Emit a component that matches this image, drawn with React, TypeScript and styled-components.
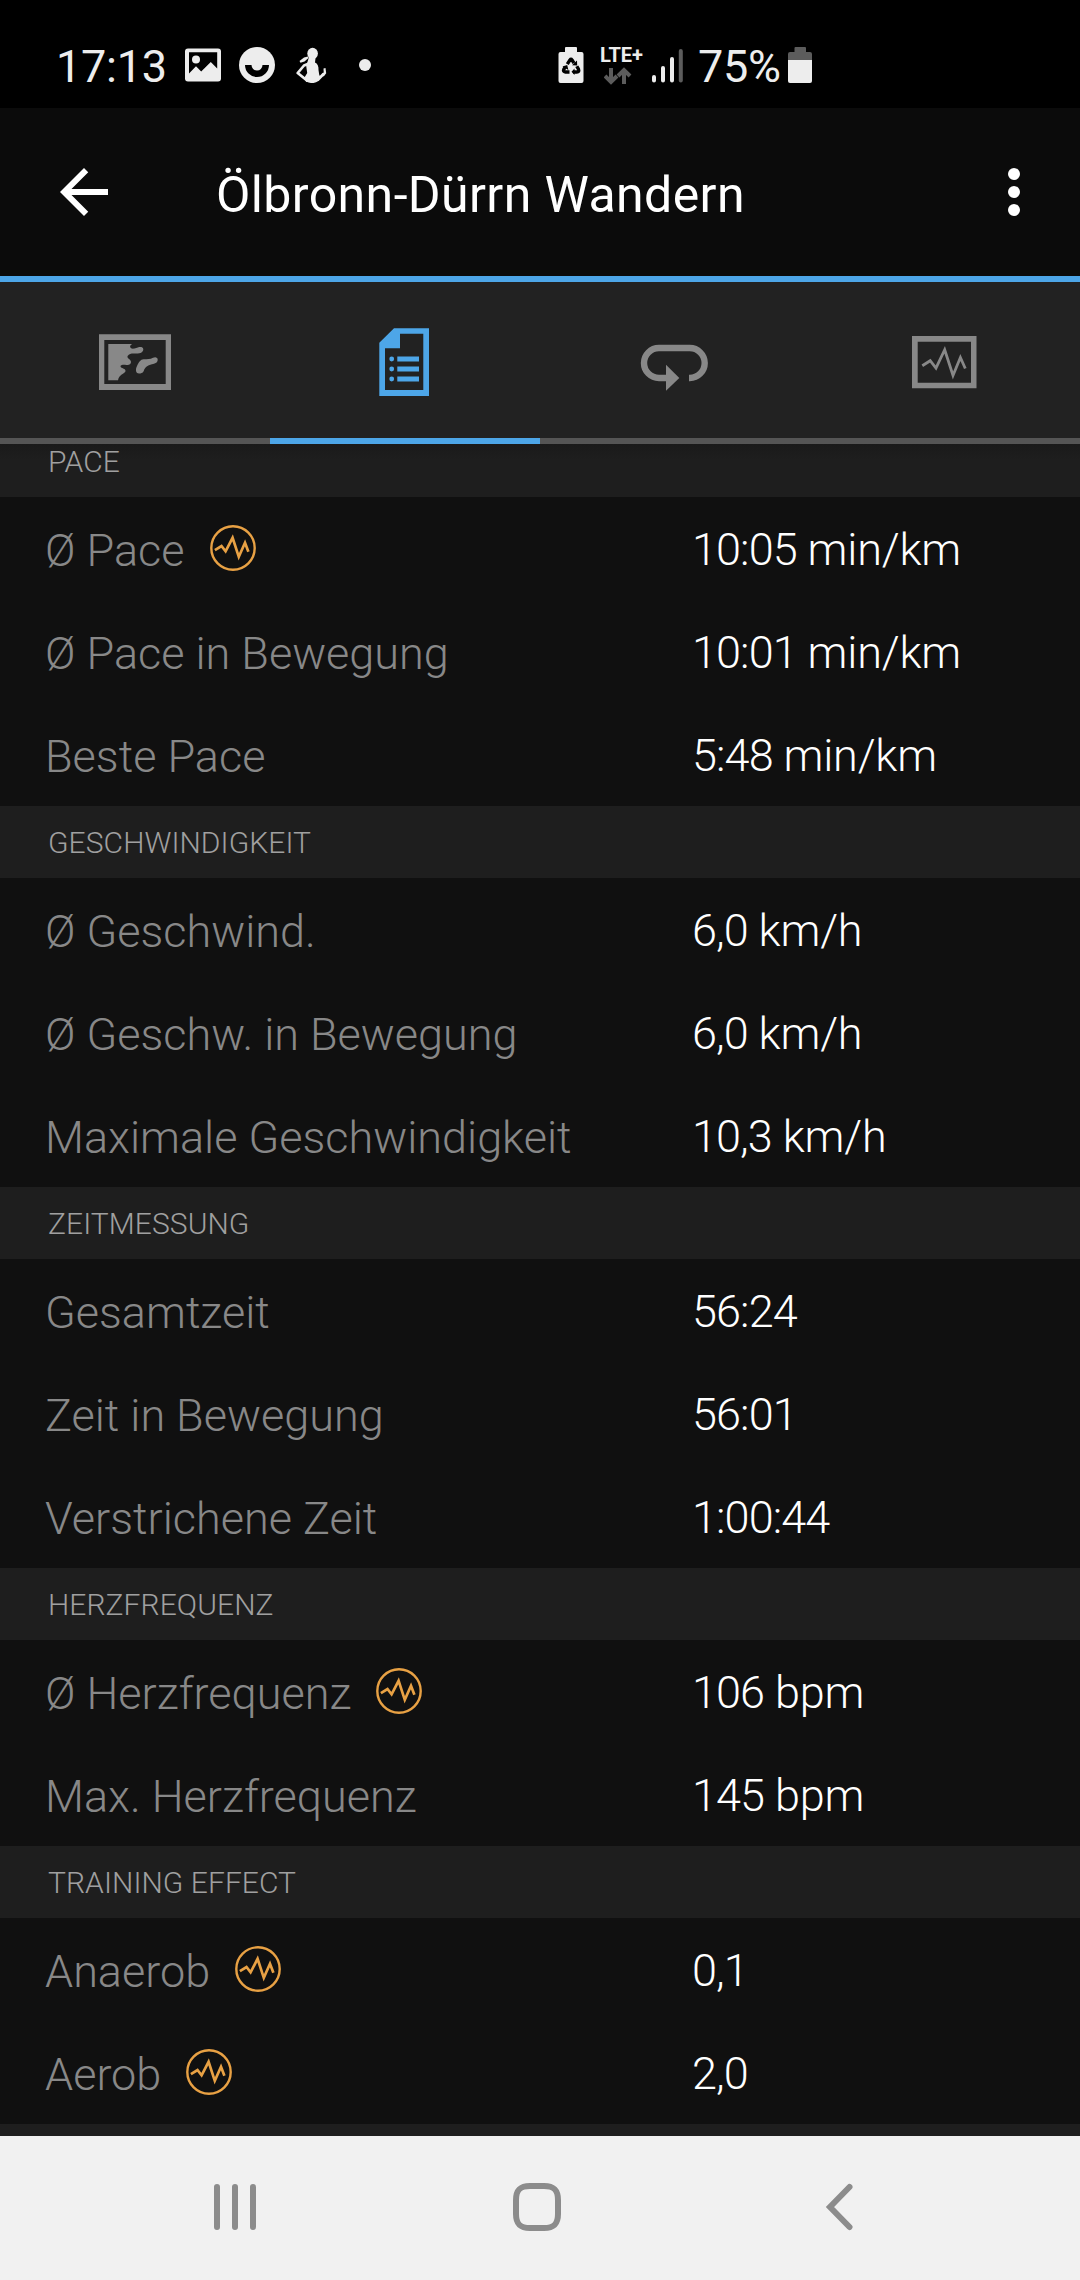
import React from 'react';
import styled, { createGlobalStyle } from 'styled-components';

const BLUE = '#4da6e8';
const GREY = '#888888';
const STATUS = '#ededed';
const DIM = '#5c5c5c';

const GlobalStyle = createGlobalStyle`
  body {
    margin: 0;
    background: #101010;
  }
  svg {
    display: block;
    flex: none;
  }
`;

const Screen = styled.div`
  width: 1080px;
  height: 2280px;
  display: flex;
  flex-direction: column;
  overflow: hidden;
  background: #101010;
  color: #ffffff;
  font-family: Roboto, 'Noto Sans', sans-serif;
`;

const StatusBar = styled.div`
  flex: none;
  box-sizing: border-box;
  height: 108px;
  padding: 22px 268px 0 56px;
  display: flex;
  align-items: center;
  justify-content: space-between;
  background: #000000;
  color: ${STATUS};
`;

const StatusGroup = styled.div`
  display: flex;
  align-items: center;
`;

const StatusText = styled.span<{ $width: number }>`
  width: ${(p) => p.$width}px;
  padding-top: 3px;
  font-size: 45px;
  line-height: 53px;
  letter-spacing: -0.25px;
  white-space: nowrap;
`;

const Gap = styled.span<{ $size: number }>`
  flex: none;
  width: ${(p) => p.$size}px;
`;

const Network = styled.div`
  width: 43px;
  height: 37px;
  padding-top: 1px;
  display: flex;
  flex-direction: column;
  align-items: flex-start;
`;

const NetworkName = styled.span`
  font-size: 20px;
  font-weight: 700;
  line-height: 17px;
  letter-spacing: -0.1px;
`;

const NetworkArrows = styled.svg`
  margin: 3px 0 0 4px;
`;

const AppBar = styled.header`
  flex: none;
  box-sizing: border-box;
  height: 174px;
  padding: 0 30px 0 48px;
  display: flex;
  align-items: center;
  background: #0b0b0b;
  border-bottom: 6px solid ${BLUE};
`;

const Title = styled.h1`
  flex: 1;
  margin: 0 0 0 96px;
  padding-top: 6px;
  font-size: 50px;
  font-weight: 400;
  line-height: 59px;
  letter-spacing: 0.4px;
`;

const Tabs = styled.nav`
  flex: none;
  height: 162px;
  display: grid;
  grid-template-columns: repeat(4, 1fr);
  background: #222222;
`;

const Tab = styled.div<{ $active?: boolean }>`
  display: flex;
  align-items: center;
  justify-content: center;
  padding-top: 4px;
  color: ${(p) => (p.$active ? BLUE : GREY)};
  border-bottom: 6px solid ${(p) => (p.$active ? BLUE : '#555555')};
`;

const List = styled.main`
  flex: 1;
  min-height: 0;
  overflow: hidden;
  display: flex;
  flex-direction: column;
`;

const SectionHeader = styled.h2<{ $clipped?: boolean }>`
  flex: none;
  box-sizing: border-box;
  height: ${(p) => (p.$clipped ? 53 : 72)}px;
  margin: 0;
  padding: 0 48px ${(p) => (p.$clipped ? 17 : 17.5)}px;
  display: flex;
  align-items: flex-end;
  background: ${(p) => (p.$clipped ? 'linear-gradient(#1a1a1a, #1e1e1e 16px)' : '#1e1e1e')};
  color: #a0a0a0;
  font-size: 30px;
  font-weight: 300;
  line-height: 36px;
  letter-spacing: 0.07px;
`;

const Row = styled.div`
  flex: none;
  height: 103px;
  padding-left: 45px;
  display: grid;
  grid-template-columns: 647px 1fr;
  align-items: center;
  font-size: 45px;
  font-weight: 300;
  line-height: 53px;
  white-space: nowrap;
`;

const Label = styled.div`
  display: flex;
  align-items: center;
  gap: 24px;
  color: #888888;
`;

const LabelText = styled.span`
  padding-top: 4px;
`;

const Value = styled.div`
  padding-top: 2px;
  white-space: pre;
`;

const Amount = styled.span`
  letter-spacing: -0.9px;
`;

const Unit = styled.span`
  letter-spacing: -0.2px;
`;

const Badge = styled.svg`
  margin-bottom: 2px;
`;

const NavBar = styled.footer`
  flex: none;
  box-sizing: border-box;
  height: 144px;
  padding: 0 90px 2px 84px;
  display: grid;
  grid-template-columns: repeat(3, 302px);
  align-items: center;
  justify-items: center;
  background: #f1f1f1;
  color: #8c8c8c;
`;

const PictureIcon = () => (
  <svg width="36" height="34" viewBox="0 0 36 34">
    <path fillRule="evenodd" fill={STATUS} d="M3 0.5h30a3 3 0 0 1 3 3v27a3 3 0 0 1-3 3H3a3 3 0 0 1-3-3v-27a3 3 0 0 1 3-3zM4 4.3v21.2l7-7.2 5.2 5.2L25.800 14l6.400 6.500V4.300z" />
    <circle cx="11" cy="11.500" r="4" fill={STATUS} />
  </svg>
);

const SmileIcon = () => (
  <svg width="36" height="36" viewBox="0 0 36 36">
    <circle cx="18" cy="18" r="18" fill={STATUS} />
    <path d="M6 18h6.500a5.500 5.500 0 0 0 11 0H30a12 12 0 0 1-24 0z" fill="#000" />
  </svg>
);

const PersonIcon = () => (
  <svg width="32" height="36" viewBox="0 0 32 36">
    <ellipse cx="16.600" cy="6.500" rx="5.300" ry="5.800" fill={STATUS} />
    <path d="M12 9.500L8 10.500 3.500 14l1 1.700 4-1.200 4-3.500z" fill={STATUS} />
    <path d="M13 10l6.500 1-.5 4.500c2.500 1 3.800 4 3.500 7.500l.7 4.500 1 2.500-5 5h-9l-2-4 3-5-1-7z" fill={STATUS} />
    <path d="M13 16.500L8 18.500 1.700 26l9 7.300c3.500 1.700 8 1.700 11-.3l6-6.200" fill="none" stroke={STATUS} strokeWidth="2.700" strokeLinejoin="round" />
    <path d="M5.500 25.500L9 21.500l.5 5-1.500 1.700z" fill="#000" />
    <path d="M27.500 21.500l2-.5.700 5.300-2.500 3.200-2-1.700 2-2.500z" fill={STATUS} />
  </svg>
);

const DotIcon = () => (
  <svg width="12" height="12" viewBox="0 0 12 12">
    <circle cx="6" cy="6" r="6" fill={STATUS} />
  </svg>
);

const RecycleBatteryIcon = () => (
  <svg width="26" height="36" viewBox="0 0 26 36">
    <path d="M7 1a1 1 0 0 1 1-1h10a1 1 0 0 1 1 1v4h4.500a2 2 0 0 1 2 2v27a2 2 0 0 1-2 2h-21a2 2 0 0 1-2-2V7a2 2 0 0 1 2-2H7z" fill={STATUS} />
    <g fill="none" stroke="#000" strokeWidth="3.400">
      <path d="M9.300 17.200L12 12.900q1-1.400 2 0l2 3.300" />
      <path d="M18.800 19.200l1.700 3.100q1 2.500-1.700 2.700h-3.600" />
      <path d="M11.500 25H7.400q-2.600-.3-1.600-2.600l1.700-2.800" />
    </g>
    <path d="M14 18.200l5.200.3-.2-5zM16.500 21.500v6.500l-3-3.200zM4.500 19.500l4.700-1.500 1.200 5z" fill="#000" />
  </svg>
);

const SignalIcon = () => (
  <svg width="32" height="36" viewBox="0 0 32 36" strokeWidth="4" strokeLinecap="round">
    <path d="M3 30v3.500M12 21v12.500M21 12v21.500" stroke={STATUS} />
    <path d="M29.800 4v29.500" stroke={DIM} />
  </svg>
);

const BatteryIcon = () => (
  <svg width="24" height="36" viewBox="0 0 24 36">
    <path d="M6.500 1a1 1 0 0 1 1-1h9.500a1 1 0 0 1 1 1v4h4a2 2 0 0 1 2 2v6H0V7a2 2 0 0 1 2-2h4.500z" fill={DIM} />
    <path d="M0 13h24v21a2 2 0 0 1-2 2H2a2 2 0 0 1-2-2z" fill={STATUS} />
  </svg>
);

const BackArrowIcon = () => (
  <svg width="72" height="72" viewBox="0 0 24 24" fill="#fff">
    <path d="M20 11H7.830l5.590-5.590L12 4l-8 8 8 8 1.410-1.410L7.830 13H20v-2z" />
  </svg>
);

const MoreIcon = () => (
  <svg width="72" height="72" viewBox="0 0 24 24" fill="#fff">
    <circle cx="12" cy="6" r="2" />
    <circle cx="12" cy="12" r="2" />
    <circle cx="12" cy="18" r="2" />
  </svg>
);

const TabIcon = ({ children }: { children: React.ReactNode }) => (
  <svg width="90" height="80" viewBox="0 0 90 80" fill="currentColor">
    {children}
  </svg>
);

const MapIcon = () => (
  <TabIcon>
    <path fillRule="evenodd" d="M9 12.300h72V68H9zM14.300 18v44h61.400V18z" />
    <path d="M18.300 22H42l-1.800 1.800c-.6 2.200 1.300 3.200 4.300 2.700 3.500-1.200 5.500-1.900 7.500-1.200 1.900 1 1.700 3.700-.2 5-2.300 1.600-5.300 1.200-8.800 1.200-3 0-5.700 1.800-5.500 3.500.3 2 3.500 2.500 3.500 5 0 2-2 3.300-4.500 2.900-2.500-.3-4.500-.6-5.700.7-1.200 2 2 2.700 3.500 3.400 2.300 1.600 1 3.300-1 4.500-2.800 1.700-4.800 3.500-5.300 6.800H18.300z" />
    <path d="M49 51.500c-3 0-4-3.500-2-7.500 2-4.300 3.500-6.300 6.500-6.700 4-.4 6.500.2 9.500-1.600 2.500-1.200 4.700-.2 4.700 1.800 0 2.300-1 3.500-3.700 4.300-4 .8-8 2.400-9.500 5.200-1 2.200-1 4.500-5.500 4.500z" />
  </TabIcon>
);

const DocumentIcon = () => (
  <TabIcon>
    <path fillRule="evenodd" d="M34 6.300h35V74H19.300V20.700zM40 11.700v14.600H25V68h38.300V11.700z" />
    {[37, 47, 57].map((y) => (
      <g key={y}>
        <circle cx="31.700" cy={y} r="2.400" />
        <rect x="37.300" y={y - 2.500} width="21.700" height="5" />
      </g>
    ))}
  </TabIcon>
);

const LapIcon = () => (
  <TabIcon>
    <path d="M37 56H29a15 15 0 0 1 0-30h30.700a15 15 0 0 1 0 30h-.7" fill="none" stroke="currentColor" strokeWidth="6.400" />
    <path d="M36 42.700L49.300 56 36 68.700z" />
  </TabIcon>
);

const ChartIcon = () => (
  <TabIcon>
    <path fillRule="evenodd" d="M12 14h64.500v52.300H12zM17.700 19.700v41H71v-41z" />
    <path d="M22.300 43.700l7.900-5 5.800 7.500 8.700-18.500L53 53.500l7.400-18 4.900 11" fill="none" stroke="currentColor" strokeWidth="2.800" />
  </TabIcon>
);

const WaveBadge = () => (
  <Badge width="48" height="48" viewBox="0 0 48 48" fill="none" stroke="#e8a144">
    <circle cx="24" cy="24" r="21.700" strokeWidth="2.400" />
    <path d="M5.900 26.200l6.600-4.200 4.100 5.300 7-13.500 6.200 19 6.200-14 3.400 9" strokeWidth="2.700" />
  </Badge>
);

const RecentsIcon = () => (
  <svg width="48" height="48" viewBox="0 0 48 48" stroke="currentColor" strokeWidth="6" strokeLinecap="round">
    <path d="M6 4v40M24 4v40M42 4v40" />
  </svg>
);

const HomeIcon = () => (
  <svg width="48" height="48" viewBox="0 0 48 48" fill="none" stroke="currentColor" strokeWidth="6">
    <path d="M17 3h14c10 0 14 4 14 14v14c0 10-4 14-14 14H17C7 45 3 41 3 31V17C3 7 7 3 17 3z" />
  </svg>
);

const BackIcon = () => (
  <svg width="48" height="48" viewBox="0 0 48 48" fill="none" stroke="currentColor" strokeWidth="6" strokeLinecap="round">
    <path d="M34.500 4L15 24l19.500 20" />
  </svg>
);

type Metric = { label: string; amount: string; unit?: string; chart?: boolean };

const sections: { title: string; rows: Metric[] }[] = [
  {
    title: 'PACE',
    rows: [
      { label: 'Ø Pace', amount: '10:05', unit: 'min/km', chart: true },
      { label: 'Ø Pace in Bewegung', amount: '10:01', unit: 'min/km' },
      { label: 'Beste Pace', amount: '5:48', unit: 'min/km' },
    ],
  },
  {
    title: 'GESCHWINDIGKEIT',
    rows: [
      { label: 'Ø Geschwind.', amount: '6,0', unit: 'km/h' },
      { label: 'Ø Geschw. in Bewegung', amount: '6,0', unit: 'km/h' },
      { label: 'Maximale Geschwindigkeit', amount: '10,3', unit: 'km/h' },
    ],
  },
  {
    title: 'ZEITMESSUNG',
    rows: [
      { label: 'Gesamtzeit', amount: '56:24' },
      { label: 'Zeit in Bewegung', amount: '56:01' },
      { label: 'Verstrichene Zeit', amount: '1:00:44' },
    ],
  },
  {
    title: 'HERZFREQUENZ',
    rows: [
      { label: 'Ø Herzfrequenz', amount: '106', unit: 'bpm', chart: true },
      { label: 'Max. Herzfrequenz', amount: '145', unit: 'bpm' },
    ],
  },
  {
    title: 'TRAINING EFFECT',
    rows: [
      { label: 'Anaerob', amount: '0,1', chart: true },
      { label: 'Aerob', amount: '2,0', chart: true },
    ],
  },
];

export default function App() {
  return (
    <Screen>
      <GlobalStyle />
      <StatusBar>
        <StatusGroup>
          <StatusText $width={129}>17:13</StatusText>
          <PictureIcon />
          <Gap $size={18} />
          <SmileIcon />
          <Gap $size={21} />
          <PersonIcon />
          <Gap $size={31} />
          <DotIcon />
        </StatusGroup>
        <StatusGroup>
          <RecycleBatteryIcon />
          <Gap $size={16} />
          <Network>
            <NetworkName>LTE+</NetworkName>
            <NetworkArrows width="28" height="18" viewBox="0 0 28 18" fill="none" stroke={DIM} strokeWidth="4">
              <path d="M7 1v13M1 9l6 6 6-6M20 17V4M14 9l6-6 6 6" />
            </NetworkArrows>
          </Network>
          <Gap $size={8} />
          <SignalIcon />
          <Gap $size={15} />
          <StatusText $width={90}>75%</StatusText>
          <BatteryIcon />
        </StatusGroup>
      </StatusBar>
      <AppBar>
        <BackArrowIcon />
        <Title>Ölbronn-Dürrn Wandern</Title>
        <MoreIcon />
      </AppBar>
      <Tabs>
        <Tab><MapIcon /></Tab>
        <Tab $active><DocumentIcon /></Tab>
        <Tab><LapIcon /></Tab>
        <Tab><ChartIcon /></Tab>
      </Tabs>
      <List>
        {sections.map((section, index) => (
          <React.Fragment key={section.title}>
            <SectionHeader $clipped={index === 0}>{section.title}</SectionHeader>
            {section.rows.map((row) => (
              <Row key={row.label}>
                <Label>
                  <LabelText>{row.label}</LabelText>
                  {row.chart && <WaveBadge />}
                </Label>
                <Value>
                  <Amount>{row.amount}</Amount>
                  {row.unit && <Unit>{` ${row.unit}`}</Unit>}
                </Value>
              </Row>
            ))}
          </React.Fragment>
        ))}
        <SectionHeader />
      </List>
      <NavBar>
        <RecentsIcon />
        <HomeIcon />
        <BackIcon />
      </NavBar>
    </Screen>
  );
}
